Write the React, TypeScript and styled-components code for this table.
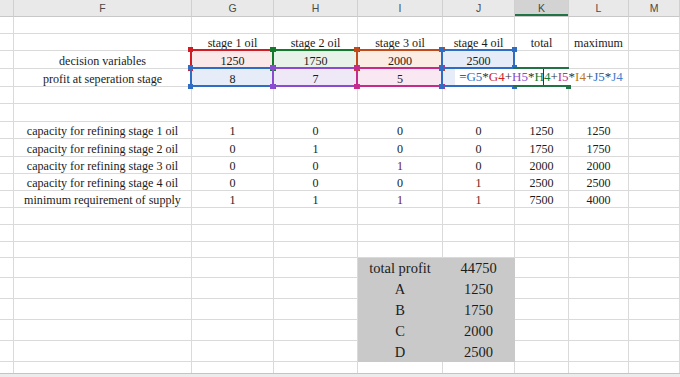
import React from 'react'
import styled, { createGlobalStyle } from 'styled-components'

type Col = 'F' | 'G' | 'H' | 'I' | 'J' | 'K' | 'L' | 'M'

type CellSpec = {
  text?: string
  fill?: string
  mark?: string
  color?: string
  big?: boolean
}

type RowSpec = {
  h: number
  cells?: Partial<Record<Col, CellSpec>>
  editing?: boolean
  last?: boolean
}

const COLUMNS: Col[] = ['F', 'G', 'H', 'I', 'J', 'K', 'L', 'M']
const TEMPLATE = '14px 178px 82px 84px 85px 72px 54px 60px 1fr'

const GRID = '#dadada'
const GREY = '#c9c9c9'
const EXCEL_GREEN = '#217346'

const ref = {
  blue: '#2f6cc4',
  red: '#d21c24',
  purple: '#8a4bd0',
  green: '#137a2c',
  magenta: '#c42b8c',
  brown: '#c2491a',
}

const tint = {
  blue: '#e6edf8',
  red: '#fbe8e8',
  purple: '#efe9f7',
  green: '#e7f2e8',
  magenta: '#f9e7f1',
  brown: '#fbece4',
}

const GlobalStyle = createGlobalStyle`
  html, body {
    margin: 0;
    padding: 0;
    background: #fff;
    overflow: hidden;
  }
  body {
    font-family: 'Liberation Serif', 'Times New Roman', serif;
  }
`

const Sheet = styled.div`
  width: 680px;
  height: 377px;
  display: flex;
  flex-direction: column;
  overflow: hidden;
`

const HeaderRow = styled.div`
  display: grid;
  grid-template-columns: ${TEMPLATE};
  height: 17px;
  flex-shrink: 0;
  background: #e9e9e9;
`

const ColHead = styled.div<{ $active?: boolean }>`
  box-sizing: border-box;
  display: flex;
  align-items: center;
  justify-content: center;
  font-family: 'Liberation Sans', Arial, sans-serif;
  font-size: 10.5px;
  color: #4a4a4a;
  border-right: 1px solid #d0d0d0;
  border-bottom: 1px solid #c8c8c8;
  background: ${(p) => (p.$active ? '#d3d3d3' : 'transparent')};
  box-shadow: ${(p) => (p.$active ? `inset 0 -2px 0 ${EXCEL_GREEN}` : 'none')};
`

const Row = styled.div<{ $h: number }>`
  display: grid;
  grid-template-columns: ${TEMPLATE};
  height: ${(p) => p.$h}px;
  flex-shrink: 0;
`

const Cell = styled.div<{ $fill?: string; $big?: boolean; $last?: boolean; $color?: string }>`
  position: relative;
  box-sizing: border-box;
  display: flex;
  align-items: flex-end;
  justify-content: center;
  white-space: nowrap;
  background: ${(p) => p.$fill ?? 'transparent'};
  border-right: 1px solid ${(p) => (p.$fill === GREY ? GREY : GRID)};
  border-bottom: ${(p) => (p.$last ? 'none' : `1px solid ${p.$fill === GREY ? GREY : GRID}`)};
  font-size: ${(p) => (p.$big ? 14.5 : 12.1)}px;
  line-height: ${(p) => (p.$big ? 17 : 14)}px;
  color: ${(p) => p.$color ?? '#1c1c1c'};
`

const RangeMark = styled.span<{ $color: string }>`
  position: absolute;
  top: -2px;
  left: -2px;
  right: -1px;
  bottom: -1px;
  border: 2px solid ${(p) => p.$color};
  pointer-events: none;
  z-index: 1;
`

const Handle = styled.i<{ $color: string; $v: 'top' | 'bottom'; $h: 'left' | 'right' }>`
  position: absolute;
  width: 5px;
  height: 5px;
  background: ${(p) => p.$color};
  ${(p) => p.$v}: -4px;
  ${(p) => p.$h}: -4px;
`

const ActiveCell = styled.span`
  position: absolute;
  top: -2px;
  left: -2px;
  right: -1px;
  bottom: -1px;
  border: 2px solid ${EXCEL_GREEN};
  z-index: 2;
`

const Editor = styled.div`
  position: absolute;
  top: 0;
  left: -60px;
  width: 172px;
  height: 16px;
  background: #fff;
  z-index: 3;
  display: flex;
  align-items: flex-end;
  justify-content: center;
  font-size: 13px;
  line-height: 16px;
  white-space: nowrap;
`

const Token = styled.span<{ $color: string }>`
  color: ${(p) => p.$color};
`

const Caret = styled.span`
  display: inline-block;
  width: 1px;
  height: 16px;
  background: #1f3d2a;
  vertical-align: bottom;
  margin: 0 -0.5px;
`

const BottomEdge = styled.div`
  flex: 1;
  border-top: 1px solid #c4c4c4;
  background: #ececec;
`

const Marked = ({ color }: { color: string }) => (
  <RangeMark $color={color}>
    <Handle $color={color} $v="top" $h="left" />
    <Handle $color={color} $v="top" $h="right" />
    <Handle $color={color} $v="bottom" $h="left" />
    <Handle $color={color} $v="bottom" $h="right" />
  </RangeMark>
)

const ONE = '#6e1c1c'

const rows: RowSpec[] = [
  { h: 17 },
  {
    h: 17,
    cells: {
      G: { text: 'stage 1 oil' },
      H: { text: 'stage 2 oil' },
      I: { text: 'stage 3 oil' },
      J: { text: 'stage 4 oil' },
      K: { text: 'total' },
      L: { text: 'maximum' },
    },
  },
  {
    h: 18,
    cells: {
      F: { text: 'decision variables' },
      G: { text: '1250', fill: tint.red, mark: ref.red },
      H: { text: '1750', fill: tint.green, mark: ref.green },
      I: { text: '2000', fill: tint.brown, mark: ref.brown },
      J: { text: '2500', fill: tint.blue, mark: ref.blue },
    },
  },
  {
    h: 18,
    editing: true,
    cells: {
      F: { text: 'profit at seperation stage' },
      G: { text: '8', fill: tint.blue, mark: ref.blue },
      H: { text: '7', fill: tint.purple, mark: ref.purple },
      I: { text: '5', fill: tint.magenta, mark: ref.magenta },
      J: { fill: tint.blue, mark: ref.blue },
    },
  },
  { h: 17 },
  { h: 18 },
  {
    h: 17,
    cells: {
      F: { text: 'capacity for refining stage 1 oil' },
      G: { text: '1' },
      H: { text: '0' },
      I: { text: '0' },
      J: { text: '0' },
      K: { text: '1250' },
      L: { text: '1250' },
    },
  },
  {
    h: 18,
    cells: {
      F: { text: 'capacity for refining stage 2 oil' },
      G: { text: '0' },
      H: { text: '1' },
      I: { text: '0' },
      J: { text: '0' },
      K: { text: '1750' },
      L: { text: '1750' },
    },
  },
  {
    h: 17,
    cells: {
      F: { text: 'capacity for refining stage 3 oil' },
      G: { text: '0' },
      H: { text: '0' },
      I: { text: '1', color: ONE },
      J: { text: '0' },
      K: { text: '2000' },
      L: { text: '2000' },
    },
  },
  {
    h: 17,
    cells: {
      F: { text: 'capacity for refining stage 4 oil' },
      G: { text: '0' },
      H: { text: '0' },
      I: { text: '0' },
      J: { text: '1', color: ONE },
      K: { text: '2500' },
      L: { text: '2500' },
    },
  },
  {
    h: 17,
    cells: {
      F: { text: 'minimum requirement of supply' },
      G: { text: '1' },
      H: { text: '1' },
      I: { text: '1', color: ONE },
      J: { text: '1', color: ONE },
      K: { text: '7500' },
      L: { text: '4000' },
    },
  },
  { h: 17 },
  { h: 17 },
  { h: 16 },
  {
    h: 20,
    cells: {
      I: { text: 'total profit', fill: GREY, big: true },
      J: { text: '44750', fill: GREY, big: true },
    },
  },
  { h: 21, cells: { I: { text: 'A', fill: GREY, big: true }, J: { text: '1250', fill: GREY, big: true } } },
  { h: 21, cells: { I: { text: 'B', fill: GREY, big: true }, J: { text: '1750', fill: GREY, big: true } } },
  { h: 21, cells: { I: { text: 'C', fill: GREY, big: true }, J: { text: '2000', fill: GREY, big: true } } },
  { h: 21, cells: { I: { text: 'D', fill: GREY, big: true }, J: { text: '2500', fill: GREY, big: true } } },
  { h: 11, last: true },
]

// the formula being typed into K5, coloured like its range references
const formula: [string, string][] = [
  ['=', '#333'],
  ['G5', ref.blue],
  ['*', '#333'],
  ['G4', ref.red],
  ['+', '#333'],
  ['H5', ref.purple],
  ['*', '#333'],
  ['H', ref.green],
]
const formulaTail: [string, string][] = [
  ['4', ref.green],
  ['+', '#333'],
  ['I5', ref.magenta],
  ['*', '#333'],
  ['I4', '#c0782a'],
  ['+', '#333'],
  ['J5', ref.blue],
  ['*', '#333'],
  ['J4', '#4a7fd0'],
]

const FormulaEditor = () => (
  <>
    <ActiveCell>
      <Handle $color={EXCEL_GREEN} $v="bottom" $h="right" />
    </ActiveCell>
    <Editor>
      <span>
        {formula.map(([t, c], i) => (
          <Token key={i} $color={c}>
            {t}
          </Token>
        ))}
        <Caret />
        {formulaTail.map(([t, c], i) => (
          <Token key={i} $color={c}>
            {t}
          </Token>
        ))}
      </span>
    </Editor>
  </>
)

export default function App() {
  return (
    <>
      <GlobalStyle />
      <Sheet>
        <HeaderRow>
          <ColHead />
          {COLUMNS.map((c) => (
            <ColHead key={c} $active={c === 'K'}>
              {c}
            </ColHead>
          ))}
        </HeaderRow>
        {rows.map((row, r) => (
          <Row key={r} $h={row.h}>
            <Cell $last={row.last} />
            {COLUMNS.map((c) => {
              const spec = row.cells?.[c]
              return (
                <Cell key={c} $fill={spec?.fill} $big={spec?.big} $last={row.last} $color={spec?.color}>
                  {spec?.text}
                  {spec?.mark && <Marked color={spec.mark} />}
                  {row.editing && c === 'K' && <FormulaEditor />}
                </Cell>
              )
            })}
          </Row>
        ))}
        <BottomEdge />
      </Sheet>
    </>
  )
}
